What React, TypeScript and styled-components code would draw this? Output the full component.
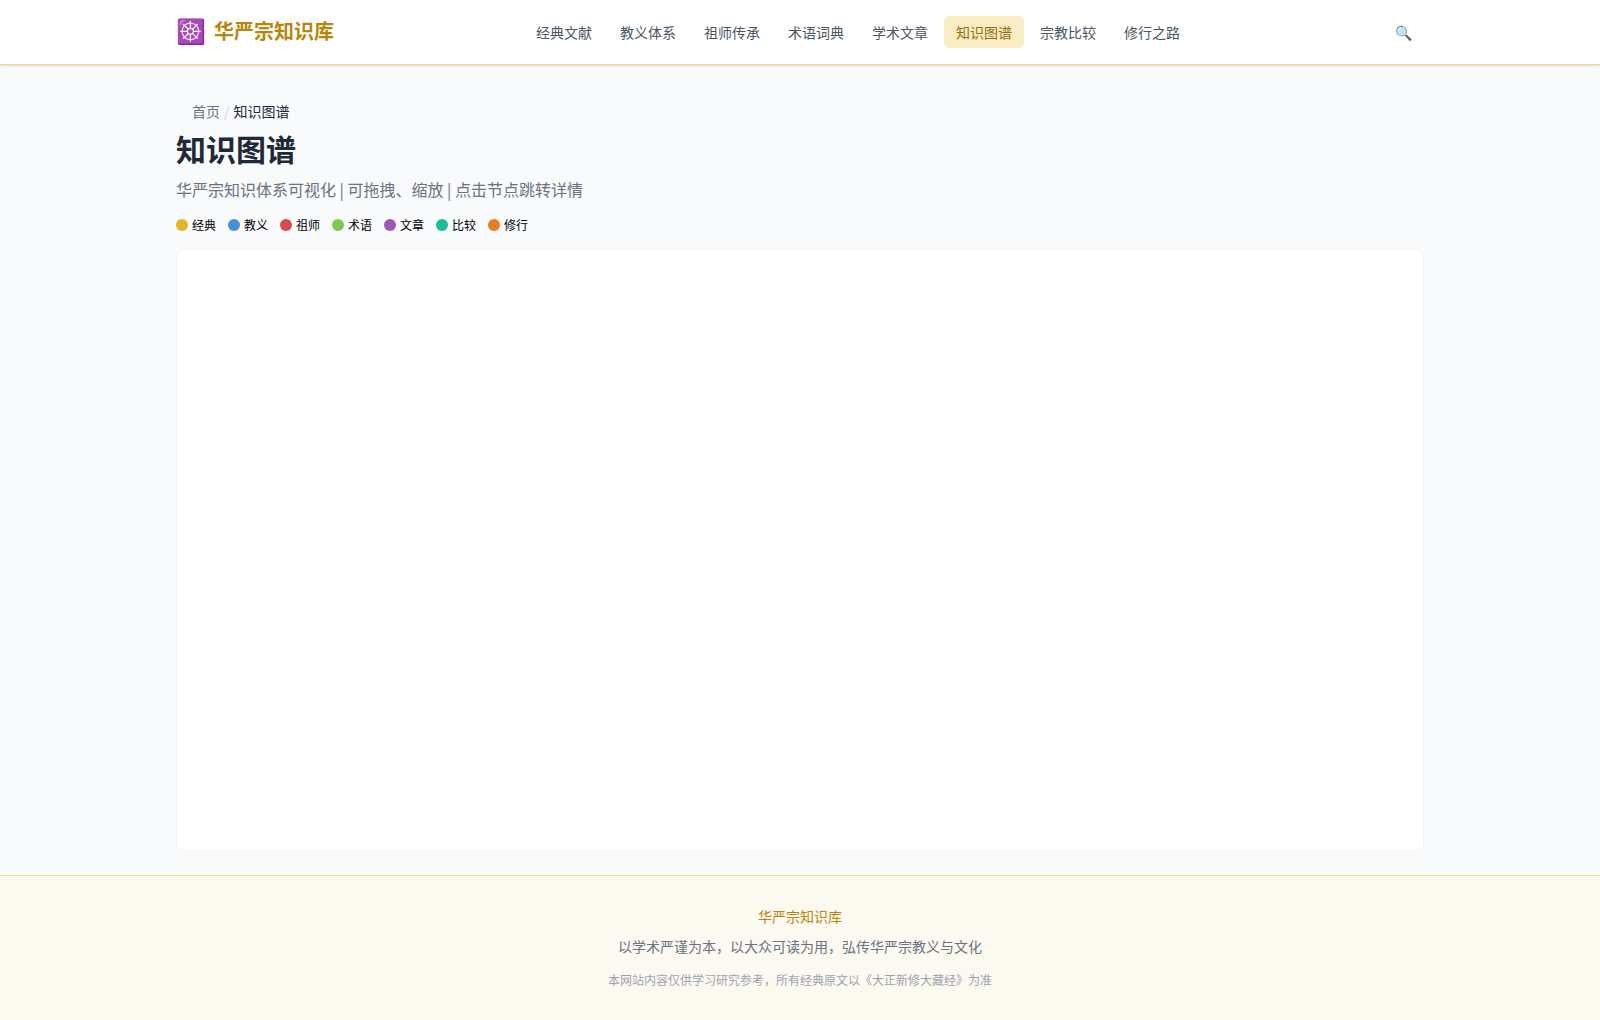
import React from 'react';
import styled, { createGlobalStyle } from 'styled-components';

const Global = createGlobalStyle`
  *, *::before, *::after { box-sizing: border-box; }
  body { margin: 0; background: #f8fafc; color: #000; line-height: 1.5; font-family: "Noto Sans CJK SC", sans-serif; }
  a { color: inherit; text-decoration: none; }
  h1, p { margin: 0; }
`;
const Page = styled.div`min-height: 1020px; display: flex; flex-direction: column; background: #f8fafc;`;
const Header = styled.header`background: #fff; height: 65px; border-bottom: 1px solid #f5d882; box-shadow: 0 1px 3px rgba(0,0,0,.1), 0 1px 2px -1px rgba(0,0,0,.1);`;
const Bar = styled.div`width: 1248px; height: 64px; margin: 0 auto; display: flex; align-items: center; justify-content: space-between;`;
const Logo = styled.a`display: flex; align-items: center; gap: 8px; padding-bottom: 2px; font-size: 20px; font-weight: 700; line-height: 28px; color: #b8860b;`;
const Wheel = styled.span`font-size: 24px; line-height: 32px; font-weight: 400; padding-bottom: 2px;`;
const Nav = styled.nav`display: flex; gap: 4px;`;
const NavLink = styled.a<{ $active?: boolean }>`
  padding: 6px 12px; font-size: 14px; line-height: 20px; border-radius: 6px;
  color: ${p => (p.$active ? '#966d09' : '#4b5563')}; background: ${p => (p.$active ? '#faedc4' : 'transparent')};
`;
const Search = styled.button`border: 0; background: none; padding: 6px 12.4px; font: 14px/20px "Noto Sans CJK SC", sans-serif;`;
const Main = styled.main`width: 1248px; margin: 0 auto; padding: 36px 0 24px; flex: 1;`;
const Crumbs = styled.div`padding-left: 16px; font-size: 14px; line-height: 20px; color: #6b7280; display: flex; gap: 4px;`;
const Slash = styled.span`color: #d1d5db;`;
const Current = styled.span`color: #1f2937;`;
const Title = styled.h1`margin-top: 9px; font-size: 30px; line-height: 36px; font-weight: 700; color: #1f2937;`;
const Intro = styled.p`margin-top: 11px; font-size: 16px; line-height: 24px; color: #6b7280;`;
const Legend = styled.div`margin-top: 16px; display: flex; gap: 12px; font-size: 12px; line-height: 16px;`;
const Item = styled.span`display: flex; align-items: center; gap: 4px;`;
const Dot = styled.i<{ $color: string }>`width: 12px; height: 12px; border-radius: 50%; background: ${p => p.$color};`;
const Graph = styled.div`margin-top: 16px; height: 602px; border: 1px solid #f3f4f6; border-radius: 8px; background: #fff;`;
const Footer = styled.footer`height: 145px; border-top: 1px solid #f5e08f; background: #fcf9f1; padding-top: 30px; text-align: center;`;
const Brand = styled.p`font-size: 14px; line-height: 20px; color: #b8860b;`;
const Motto = styled.p`margin-top: 10px; font-size: 14px; line-height: 20px; color: #6b7280;`;
const Note = styled.p`margin-top: 16px; font-size: 12px; line-height: 16px; color: #9ca3af;`;

const links = ['经典文献', '教义体系', '祖师传承', '术语词典', '学术文章', '知识图谱', '宗教比较', '修行之路'];
const legend = [['经典', '#e6b422'], ['教义', '#4a90d9'], ['祖师', '#d94a4a'], ['术语', '#7ec850'], ['文章', '#9b59b6'], ['比较', '#1abc9c'], ['修行', '#e67e22']];

export default function App() {
  return (
    <Page lang="zh-CN">
      <Global />
      <Header><Bar>
        <Logo href="#"><Wheel>☸️</Wheel><span>华严宗知识库</span></Logo>
        <Nav>{links.map(l => <NavLink key={l} href="#" $active={l === '知识图谱'}>{l}</NavLink>)}</Nav>
        <Search aria-label="搜索">🔍</Search>
      </Bar></Header>
      <Main>
        <Crumbs><a href="#">首页</a><Slash>/</Slash><Current>知识图谱</Current></Crumbs>
        <Title>知识图谱</Title>
        <Intro>华严宗知识体系可视化 | 可拖拽、缩放 | 点击节点跳转详情</Intro>
        <Legend>{legend.map(([n, c]) => <Item key={n}><Dot $color={c} />{n}</Item>)}</Legend>
        <Graph />
      </Main>
      <Footer>
        <Brand>华严宗知识库</Brand>
        <Motto>以学术严谨为本，以大众可读为用，弘传华严宗教义与文化</Motto>
        <Note>本网站内容仅供学习研究参考，所有经典原文以《大正新修大藏经》为准</Note>
      </Footer>
    </Page>
  );
}
